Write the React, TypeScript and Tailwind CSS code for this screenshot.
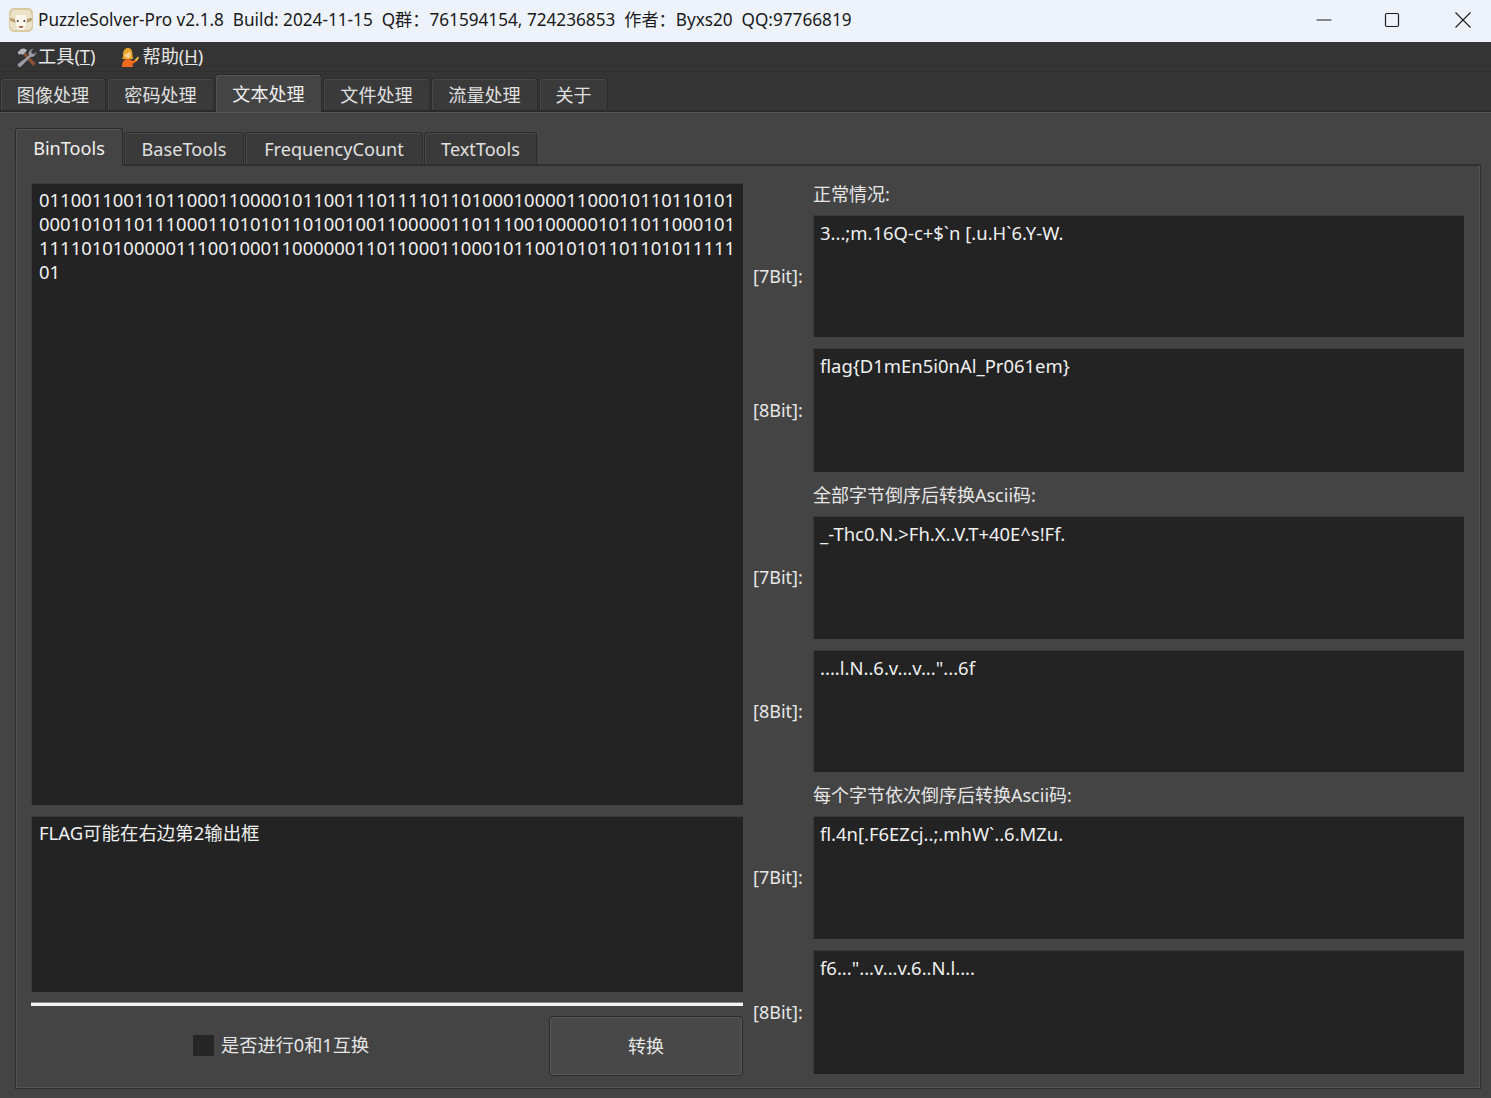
import { ReactNode } from 'react';

const FONT = "font-['Noto_Sans','Noto_Sans_CJK_SC',sans-serif]";

const TOP_TABS = [
  { label: '图像处理', w: 'w-[106px]' },
  { label: '密码处理', w: 'w-[107px]' },
  { label: '文本处理', w: 'w-[107px]', active: true },
  { label: '文件处理', w: 'w-[107px]' },
  { label: '流量处理', w: 'w-[107px]' },
  { label: '关于', w: 'w-[69px]' },
];

const SUB_TABS = [
  { label: 'BinTools', w: 'w-[108px]', active: true },
  { label: 'BaseTools', w: 'w-[120px]' },
  { label: 'FrequencyCount', w: 'w-[178px]' },
  { label: 'TextTools', w: 'w-[113px]' },
];

const BIN_TEXT = `011001100110110001100001011001110111101101000100001100010110110101
000101011011100011010101101001001100000110111001000001011011000101
111101010000011100100011000000110110001100010110010101101101011111
01`;

function Tab({ label, w, active }: { label: string; w: string; active?: boolean }) {
  return (
    <div
      className={
        active
          ? `${w} h-[38px] shrink-0 flex items-center justify-center pt-[2px] rounded-t-[3px] border border-b-0 border-[#2c2c2c] bg-[#444444] shadow-[inset_1px_1px_0_#555555] text-[#f0f0f0] text-[18.1px] relative z-10 -mb-[2px]`
          : `${w} h-[32px] shrink-0 flex items-center justify-center pt-[2px] rounded-t-[3px] border border-[#2c2c2c] border-b-0 bg-[#3a3a3a] shadow-[inset_1px_1px_0_#484848] text-[#e0e0e0] text-[18.1px]`
      }
    >
      {label}
    </div>
  );
}

function Box({ h, left, children }: { h: string; left?: boolean; children?: ReactNode }) {
  return (
    <div
      className={
        left
          ? `${h} shrink-0 bg-[#232323] border-l border-t border-[#3a3a3a] pl-[7px] pt-[4px] leading-[24px] text-[#f0f0f0] whitespace-pre`
          : `${h} shrink-0 bg-[#232323] border-l border-t border-[#3a3a3a] pl-[6px] pt-[5px] leading-[24px] text-[#f0f0f0] whitespace-pre`
      }
    >
      {children}
    </div>
  );
}

function OutputRow({ bit, text, h }: { bit: string; text: string; h: string }) {
  return (
    <div className="flex items-center">
      <div className="w-[60px] shrink-0 text-[18px] text-[#e6e6e6]">{bit}</div>
      <div className="flex-1">
        <Box h={h}>{text}</Box>
      </div>
    </div>
  );
}

function SheepLogo() {
  return (
    <svg width="24" height="24" viewBox="0 0 24 24">
      <rect x="0" y="0" width="24" height="24" rx="5" fill="#d9c8a0" />
      <path d="M3 2h18l2 6v10l-2 4H3l-2-4V8z" fill="#ece2c8" />
      <path d="M1 10c2 0 4 .5 6 2v2.500c-3 0-5-1-6-2.500zM23 10c-2 0-4 .5-6 2v2.500c3 0 5-1 6-2.500z" fill="#b89f72" />
      <path d="M7.500 7h9l1.500 5-3 10H9L6 12z" fill="#fbf7ec" />
      <circle cx="8.700" cy="13" r=".9" fill="#3a3024" />
      <circle cx="15.300" cy="13" r=".9" fill="#3a3024" />
      <path d="M9.500 18h5l-1 2h-3z" fill="#b4705f" />
    </svg>
  );
}

function ToolsIcon() {
  return (
    <svg width="19" height="19" viewBox="0 0 19 19">
      <path d="M5.500 5.500 7.500 3.500 18.500 15.500 16 18z" fill="#8d5233" />
      <path d="M0.500 4.500 4 1c1.500-.8 3-.8 4.500 0L10 2.500 5.500 7 4 5.500 2.500 7z" fill="#b4b4bc" />
      <path d="M12 7.500C10.800 5 12.500 1 16.500 0.500L14 3.500 15 5.500 17.500 6 19 3.500C19.300 7 16 9.500 13.500 9L4 18.500C3 19.300 1.500 18.800 1 18S.7 16 1.500 15.500z" fill="#9c9ca6" />
    </svg>
  );
}

function PersonIcon() {
  return (
    <svg width="18" height="20" viewBox="0 0 18 20">
      <path d="M1 20c0-5 2-8 5.500-8s4 1.500 5 2l3.500-1.500.5 2L11.500 17l.5 3z" fill="#ee6a1f" />
      <path d="M2 8c0-4.500 2-7 5-7s4.500 2.500 4.500 7c0 2 .5 3 1 4H1c.5-1 1-2 1-4z" fill="#e9a52a" />
      <path d="M3.500 7c2 0 4-1 5-2.500.5 1 1 1.500 1.500 2 0 3-1.500 4.500-3.200 4.500S3.500 9.500 3.500 7z" fill="#f7cf8f" />
      <path d="M13.500 13 17 9.500 18 10.500 16 14z" fill="#f5b93f" />
    </svg>
  );
}

export default function App() {
  return (
    <div className={`w-[1491px] h-[1098px] overflow-hidden flex flex-col bg-[#3c3c3c] text-[18.45px] ${FONT}`}>
      {/* Title bar */}
      <div className="h-[42px] shrink-0 bg-[#eef3fb] flex items-center text-[#1a1a1a] pl-[9px] pb-[2px] text-[17.18px]">
        <SheepLogo />
        <div className="ml-[5px] whitespace-pre flex-1">
          PuzzleSolver-Pro v2.1.8  Build: 2024-11-15  Q群：761594154, 724236853  作者：Byxs20  QQ:97766819
        </div>
        <div className="flex items-center">
          <svg width="16" height="16" viewBox="0 0 16 16" className="mr-[52px]">
            <path d="M0.500 8h15" stroke="#1a1a1a" strokeWidth="1" />
          </svg>
          <svg width="16" height="16" viewBox="0 0 16 16" className="mr-[55px]">
            <rect x="1.500" y="1.500" width="13" height="13" rx="1.500" fill="none" stroke="#1a1a1a" strokeWidth="1.200" />
          </svg>
          <svg width="16" height="16" viewBox="0 0 16 16" className="mr-[20px]">
            <path d="M0.500 0.500l15 15M15.500 0.500l-15 15" stroke="#1a1a1a" strokeWidth="1.100" />
          </svg>
        </div>
      </div>

      {/* Menu bar */}
      <div className="h-[30px] shrink-0 bg-[#343434] border-b border-[#2f2f2f] flex items-center pt-[1px] text-[#e6e6e6] text-[18.2px] pl-[17px]">
        <ToolsIcon />
        <span className="ml-[2px]">工具(<span className="underline">T</span>)</span>
        <span className="ml-[26px]"><PersonIcon /></span>
        <span className="ml-[3px]">帮助(<span className="underline">H</span>)</span>
      </div>

      {/* Top tabs */}
      <div className="h-[40px] shrink-0 flex items-end gap-px bg-[#353535] border-b-2 border-[#2a2a2a]">
        {TOP_TABS.map((t) => (
          <Tab key={t.label} {...t} />
        ))}
      </div>

      {/* Page */}
      <div className="flex-1 bg-[#444444] border-t border-[#555555] pl-[15px] pr-[10px] pt-[15px] flex flex-col">
        <div className="flex items-end gap-px">
          {SUB_TABS.map((t) => (
            <Tab key={t.label} {...t} />
          ))}
        </div>

        <div className="h-[925px] shrink-0 border-t-2 border-x border-b border-[#2f2f2f] shadow-[inset_1px_0_0_#555555,inset_-1px_-1px_0_#555555] flex pl-[15px] pr-[16px] pt-[17px] gap-[10px]">
          {/* Left column */}
          <div className="w-[712px] shrink-0 flex flex-col">
            <Box left h="h-[622px]">{BIN_TEXT}</Box>
            <div className="h-[11px] shrink-0" />
            <Box left h="h-[176px]">FLAG可能在右边第2输出框</Box>
            <div className="h-[10px] shrink-0" />
            <div className="h-[4px] shrink-0 bg-[#f4f4f4] border-t border-[#8a8a8a]" />
            <div className="flex items-center mt-[10px] h-[60px] shrink-0">
              <div className="w-[518px] flex items-center pl-[162px] text-[#e6e6e6] text-[18.200px]">
                <div className="w-[21px] h-[21px] bg-[#262626] mr-[7px]" />
                是否进行0和1互换
              </div>
              <div className="w-[194px] h-[60px] rounded-[4px] border border-[#2a2a2a] bg-[#484848] shadow-[inset_0_0_0_1px_#5a5a5a] flex items-center justify-center text-[#e6e6e6] text-[18px]">
                转换
              </div>
            </div>
          </div>

          {/* Right column */}
          <div className="flex-1 flex flex-col">
            <div className="h-[32px] pl-[60px] pb-[9px] flex items-center text-[#e6e6e6] text-[18px]">正常情况:</div>
            <OutputRow bit="[7Bit]:" h="h-[122px]" text={'3...;m.16Q-c+$`n [.u.H`6.Y-W.'} />
            <div className="h-[11px]" />
            <OutputRow bit="[8Bit]:" h="h-[124px]" text="flag{D1mEn5i0nAl_Pr061em}" />
            <div className="h-[44px] pl-[60px] pt-[2px] flex items-center text-[#e6e6e6] text-[18px]">全部字节倒序后转换Ascii码:</div>
            <OutputRow bit="[7Bit]:" h="h-[123px]" text="_-Thc0.N.>Fh.X..V.T+40E^s!Ff." />
            <div className="h-[11px]" />
            <OutputRow bit="[8Bit]:" h="h-[122px]" text={'....l.N..6.v...v..."...6f'} />
            <div className="h-[44px] pl-[60px] pt-[2px] flex items-center text-[#e6e6e6] text-[18px]">每个字节依次倒序后转换Ascii码:</div>
            <OutputRow bit="[7Bit]:" h="h-[123px]" text="fl.4n[.F6EZcj..;.mhW`..6.MZu." />
            <div className="h-[11px]" />
            <OutputRow bit="[8Bit]:" h="h-[124px]" text={'f6..."...v...v.6..N.l....'} />
          </div>
        </div>
      </div>
    </div>
  );
}
